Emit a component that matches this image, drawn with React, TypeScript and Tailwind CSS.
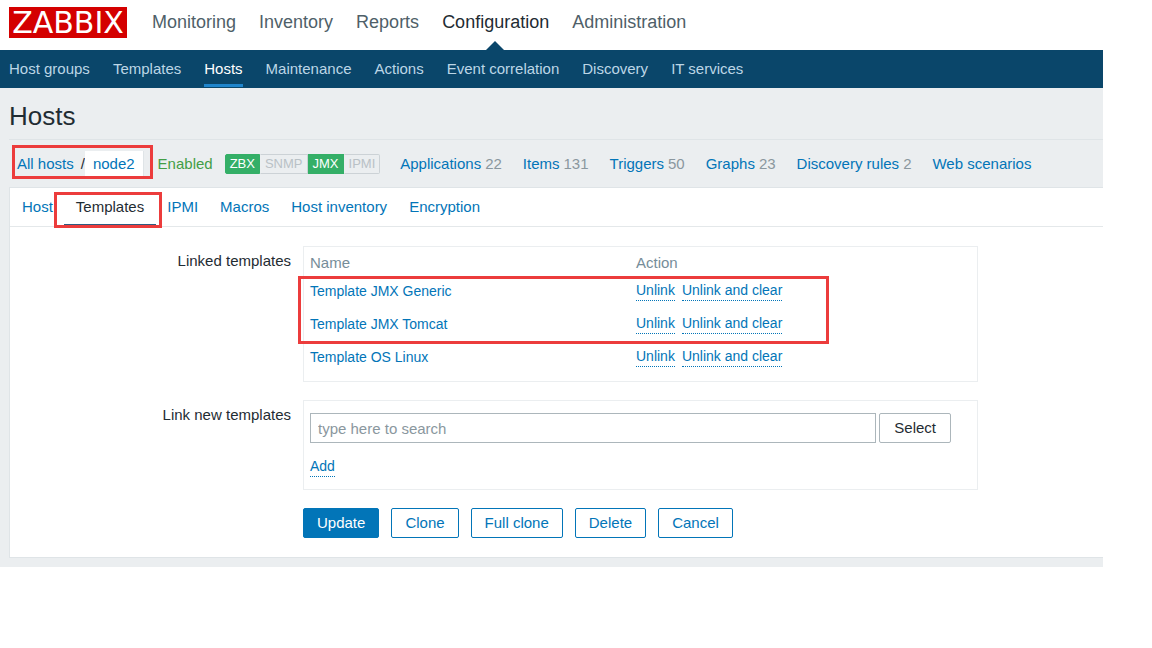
import clsx from 'clsx';

const mainMenu = ['Monitoring', 'Inventory', 'Reports', 'Configuration', 'Administration'];

const subMenu = [
  'Host groups', 'Templates', 'Hosts', 'Maintenance',
  'Actions', 'Event correlation', 'Discovery', 'IT services',
];

const interfaces = [
  { name: 'ZBX', available: true },
  { name: 'SNMP', available: false },
  { name: 'JMX', available: true },
  { name: 'IPMI', available: false },
];

const hostLinks = [
  { name: 'Applications', count: 22 },
  { name: 'Items', count: 131 },
  { name: 'Triggers', count: 50 },
  { name: 'Graphs', count: 23 },
  { name: 'Discovery rules', count: 2 },
  { name: 'Web scenarios' },
];

const tabs = ['Host', 'Templates', 'IPMI', 'Macros', 'Host inventory', 'Encryption'];

const linkedTemplates = ['Template JMX Generic', 'Template JMX Tomcat', 'Template OS Linux'];

const actions = ['Update', 'Clone', 'Full clone', 'Delete', 'Cancel'];

// Red outline drawn over the content it points at
function Highlight({ className }: { className: string }) {
  return <div className={clsx('pointer-events-none absolute border-3 border-[#ec3c3c]', className)} />;
}

function DottedButton({ children }: { children: string }) {
  return (
    <button type="button" className="border-b border-dotted border-[#0275b8] text-sm leading-[19px] text-[#0275b8]">
      {children}
    </button>
  );
}

function Header() {
  return (
    <header>
      <div className="flex h-[50px] items-start pl-[9px]">
        <a
          href="#"
          className="mt-[7px] mr-[25px] flex h-[31px] w-[118px] items-center justify-center bg-[#d40000] font-['DejaVu_Sans',sans-serif] text-[30px] leading-none text-white"
        >
          ZABBIX
        </a>
        <nav className="flex h-full gap-[23px] text-lg">
          {mainMenu.map((item) => (
            <a
              key={item}
              href="#"
              className={clsx(
                'relative pt-2 whitespace-nowrap',
                item === 'Configuration' ? 'text-[#1f2c33]' : 'text-[#4f5f69]'
              )}
            >
              {item}
              {item === 'Configuration' && (
                <svg className="absolute bottom-0 left-1/2 -ml-[10px]" width="18" height="9" viewBox="0 0 18 9">
                  <path d="M0 9L9 0l9 9z" fill="#0a466a" />
                </svg>
              )}
            </a>
          ))}
        </nav>
      </div>
      <nav className="flex h-[38px] gap-[23px] bg-[#0a466a] pl-[9px]">
        {subMenu.map((item) => (
          <a
            key={item}
            href="#"
            className={clsx(
              'mb-px border-b-3 pt-2 leading-[22px] whitespace-nowrap',
              item === 'Hosts' ? 'border-[#1f85cc] text-white' : 'border-transparent text-[#bcd6e6]'
            )}
          >
            {item}
          </a>
        ))}
      </nav>
    </header>
  );
}

function HostBar() {
  return (
    <div className="relative flex h-12 items-center border-t border-[#dfe4e7] pl-2">
      <a href="#" className="text-[#0275b8]">All hosts</a>
      <span className="ml-[7px] text-[#1f2c33]">/</span>
      <a href="#" className="border-r border-[#dfe4e7] bg-white px-2 leading-[26px] text-[#0275b8]">node2</a>
      <span className="ml-[14px] text-[#429e47]">Enabled</span>
      <div className="ml-3 flex text-[13px] leading-[18px]">
        {interfaces.map(({ name, available }) => (
          <span
            key={name}
            className={clsx(
              'border px-1 first:rounded-l-xs last:rounded-r-xs',
              available ? 'border-[#34af67] bg-[#34af67] text-white' : 'border-[#ccd2d6] border-l-transparent text-[#b9c1c6]'
            )}
          >
            {name}
          </span>
        ))}
      </div>
      <nav className="ml-5 flex gap-[21px]">
        {hostLinks.map(({ name, count }) => (
          <span key={name} className="whitespace-nowrap">
            <a href="#" className="text-[#0275b8]">{name}</a>
            {count && <span className="ml-1 text-[#8a979e]">{count}</span>}
          </span>
        ))}
      </nav>
      <Highlight className="top-[5px] left-[3px] h-[34px] w-[141px]" />
    </div>
  );
}

function Tabs() {
  return (
    <nav className="relative flex h-[39px] border-b border-[#e4e8ea] pl-px">
      {tabs.map((tab) => (
        <a
          key={tab}
          href="#"
          className={clsx(
            'border-b-2 pt-2 leading-[22px] whitespace-nowrap',
            tab === 'Templates' ? 'border-[#2f5b80] px-3 text-[#1f2c33]' : 'border-transparent px-[11px] text-[#0275b8]'
          )}
        >
          {tab}
        </a>
      ))}
      <Highlight className="top-1 left-11 h-9 w-[108px]" />
    </nav>
  );
}

function TemplatesForm() {
  return (
    <form className="grid grid-cols-[281px_minmax(0,675px)] gap-x-3 pt-[19px] pb-[19px]">
      <div className="pt-1 text-right leading-[22px] text-[#1f2c33]">Linked templates</div>
      <div className="relative border border-[#ebeef0] px-[6px] pb-[7px]">
        <table className="w-full table-fixed text-left">
          <thead>
            <tr className="h-7 text-[#768d99]">
              <th className="w-[326px] pt-1 font-normal">Name</th>
              <th className="pt-1 font-normal">Action</th>
            </tr>
          </thead>
          <tbody className="text-sm">
            {linkedTemplates.map((name) => (
              <tr key={name} className="h-[33px] align-top">
                <td className="pt-[6px]">
                  <a href="#" className="text-[#0275b8]">{name}</a>
                </td>
                <td className="pt-[6px]">
                  <div className="flex gap-[7px]">
                    <DottedButton>Unlink</DottedButton>
                    <DottedButton>Unlink and clear</DottedButton>
                  </div>
                </td>
              </tr>
            ))}
          </tbody>
        </table>
        <Highlight className="top-[29px] -left-[6px] h-[68px] w-[531px]" />
      </div>

      <label htmlFor="template-search" className="mt-[18px] pt-1 text-right leading-[22px] text-[#1f2c33]">
        Link new templates
      </label>
      <div className="mt-[18px] border border-[#ebeef0] px-[6px] py-3">
        <div className="flex gap-[3px] pr-5">
          <input
            id="template-search"
            type="text"
            placeholder="type here to search"
            className="h-[30px] min-w-0 flex-1 border border-[#acb6bb] px-[7px] placeholder:text-[#8a979e]"
          />
          <button type="button" className="h-[30px] rounded-xs border border-[#acb6bb] px-[14px] text-[#1f2c33]">
            Select
          </button>
        </div>
        <div className="mt-[14px] flex">
          <DottedButton>Add</DottedButton>
        </div>
      </div>

      <div className="col-start-2 mt-[18px] flex gap-3">
        {actions.map((action) => (
          <button
            key={action}
            type="button"
            className={clsx(
              'h-[30px] rounded-xs border border-[#0275b8] px-[13px] whitespace-nowrap',
              action === 'Update' ? 'bg-[#0275b8] text-white' : 'bg-white text-[#0275b8]'
            )}
          >
            {action}
          </button>
        ))}
      </div>
    </form>
  );
}

export default function App() {
  return (
    <div className="bg-white pr-[49px] font-['Liberation_Sans',Arial,sans-serif] text-[15px] leading-5">
      <Header />
      <main className="bg-[#ebeef0] pb-[9px] pl-[9px]">
        <h1 className="h-[51px] pt-3 text-[26px] leading-8 text-[#1f2c33]">Hosts</h1>
        <HostBar />
        <section className="border border-r-0 border-[#dfe4e7] bg-white">
          <Tabs />
          <TemplatesForm />
        </section>
      </main>
    </div>
  );
}
